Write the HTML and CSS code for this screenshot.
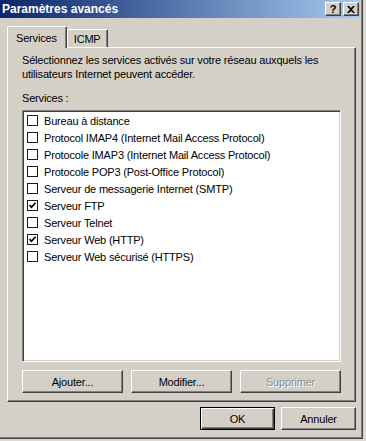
FILE: index.html
```html
<!DOCTYPE html>
<html lang="fr">
<head>
    <meta charset="UTF-8">
    <title>Paramètres avancés</title>
    <link rel="stylesheet" href="styles.css">
</head>
<body>
    <div class="window">
        <div class="titlebar">
            <span class="title">Paramètres avancés</span>
            <div class="caption-btns">
                <span class="cap-btn help">?</span>
                <span class="cap-btn close">
                    <svg width="8" height="7" viewBox="0 0 8 7"><path d="M0 0h2l2 2 2-2h2L5 3.5 8 7H6L4 5 2 7H0l3-3.5z" fill="#000"/></svg>
                </span>
            </div>
        </div>

        <div class="client">
            <div class="tabs">
                <div class="tab active">Services</div>
                <div class="tab">ICMP</div>
            </div>

            <div class="panel">
                <p class="intro">Sélectionnez les services activés sur votre réseau auxquels les<br>utilisateurs Internet peuvent accéder.</p>
                <div class="field-label">Services :</div>

                <ul class="service-list">
                    <li><span class="check"></span>Bureau à distance</li>
                    <li><span class="check"></span>Protocol IMAP4 (Internet Mail Access Protocol)</li>
                    <li><span class="check"></span>Protocole IMAP3 (Internet Mail Access Protocol)</li>
                    <li><span class="check"></span>Protocole POP3 (Post-Office Protocol)</li>
                    <li><span class="check"></span>Serveur de messagerie Internet (SMTP)</li>
                    <li><span class="check checked"><svg width="9" height="9" viewBox="0 0 9 9"><path d="M1.5 4.2l2 2 4-4.4" fill="none" stroke="#000" stroke-width="1.7"/></svg></span>Serveur FTP</li>
                    <li><span class="check"></span>Serveur Telnet</li>
                    <li><span class="check checked"><svg width="9" height="9" viewBox="0 0 9 9"><path d="M1.5 4.2l2 2 4-4.4" fill="none" stroke="#000" stroke-width="1.7"/></svg></span>Serveur Web (HTTP)</li>
                    <li><span class="check"></span>Serveur Web sécurisé (HTTPS)</li>
                </ul>

                <div class="list-btns">
                    <button class="btn">Ajouter...</button>
                    <button class="btn">Modifier...</button>
                    <button class="btn" disabled>Supprimer</button>
                </div>
            </div>

            <div class="dialog-btns">
                <button class="btn default">OK</button>
                <button class="btn">Annuler</button>
            </div>
        </div>
    </div>
</body>
</html>
```

FILE: styles.css
```css
body {
    margin: 0;
    padding: 0;
    width: 366px;
    height: 441px;
    overflow: hidden;
    background-color: #dcd9d2;
    font-family: 'Liberation Sans', Arial, sans-serif;
    font-size: 11px;
    letter-spacing: -0.18px;
    color: #000;
}

.window {
    width: 363px;
    height: 439px;
    box-sizing: border-box;
    background-color: #d4d0c8;
    border-right: 1px solid #404040;
    border-bottom: 1px solid #404040;
    box-shadow: inset -1px -1px 0 #808080;
    padding-right: 2px;
}

/* title bar */
.titlebar {
    height: 18px;
    display: flex;
    align-items: center;
    justify-content: space-between;
    padding: 0 1px 0 2px;
    background: linear-gradient(to right, #0a246a, #a6caf0);
}

.title {
    color: #fff;
    font-weight: bold;
    font-size: 12px;
    letter-spacing: 0;
}

.caption-btns {
    display: flex;
    gap: 2px;
}

.cap-btn {
    width: 16px;
    height: 14px;
    box-sizing: border-box;
    background-color: #d4d0c8;
    border-top: 1px solid #fff;
    border-left: 1px solid #fff;
    border-right: 1px solid #404040;
    border-bottom: 1px solid #404040;
    box-shadow: inset -1px -1px 0 #808080;
    display: flex;
    align-items: center;
    justify-content: center;
    font-weight: bold;
    font-size: 11px;
    line-height: 1;
}

/* client area */
.client {
    padding: 8px 4px 0 7px;
}

.tabs {
    display: flex;
    align-items: flex-end;
    height: 21px;
}

.tab {
    height: 18px;
    box-sizing: border-box;
    padding: 3px 6px 0 6px;
    border-top: 1px solid #fff;
    border-left: 1px solid #fff;
    border-right: 1px solid #404040;
    box-shadow: inset -1px 0 0 #808080;
    border-radius: 2px 2px 0 0;
}

.tab.active {
    height: 22px;
    margin-bottom: -1px;
    padding: 5px 9px 0 8px;
    background-color: #d4d0c8;
    position: relative;
    z-index: 1;
}

.panel {
    height: 355px;
    box-sizing: border-box;
    border-top: 1px solid #fff;
    border-left: 1px solid #fff;
    border-right: 1px solid #404040;
    border-bottom: 1px solid #404040;
    box-shadow: inset -1px -1px 0 #808080;
    padding: 5px 0 0 14px;
}

.intro {
    margin: 0;
    line-height: 14px;
}

.field-label {
    margin-top: 10px;
    line-height: 14px;
}

.service-list {
    list-style: none;
    margin: 5px 0 0 0;
    padding: 0 0 0 2px;
    width: 319px;
    height: 252px;
    box-sizing: border-box;
    background-color: #fff;
    border-top: 1px solid #808080;
    border-left: 1px solid #808080;
    border-right: 1px solid #fff;
    border-bottom: 1px solid #fff;
    box-shadow: inset 1px 1px 0 #404040, inset -1px -1px 0 #d4d0c8;
    padding-top: 1px;
}

.service-list li {
    height: 17px;
    display: flex;
    align-items: center;
    padding-left: 2px;
}

.check {
    width: 11px;
    height: 11px;
    box-sizing: border-box;
    border: 1px solid #1a1a1a;
    margin-right: 6px;
    display: flex;
    align-items: center;
    justify-content: center;
}

.list-btns {
    display: flex;
    gap: 8px;
    margin-top: 8px;
}

.btn {
    width: 101px;
    height: 23px;
    box-sizing: border-box;
    padding: 0;
    font-family: 'Liberation Sans', Arial, sans-serif;
    font-size: 11px;
    letter-spacing: -0.18px;
    color: #000;
    background-color: #d4d0c8;
    border-top: 1px solid #fff;
    border-left: 1px solid #fff;
    border-right: 1px solid #404040;
    border-bottom: 1px solid #404040;
    border-radius: 0;
    box-shadow: inset -1px -1px 0 #808080;
}

.btn:disabled {
    color: #8c8c8c;
    text-shadow: 1px 1px 0 #fff;
}

.dialog-btns {
    display: flex;
    justify-content: flex-end;
    gap: 6px;
    margin-top: 5px;
}

.dialog-btns .btn {
    width: 75px;
}

.btn.default {
    border: 1px solid #000;
    box-shadow: inset 1px 1px 0 #fff, inset -1px -1px 0 #404040, inset -2px -2px 0 #808080;
}
```
